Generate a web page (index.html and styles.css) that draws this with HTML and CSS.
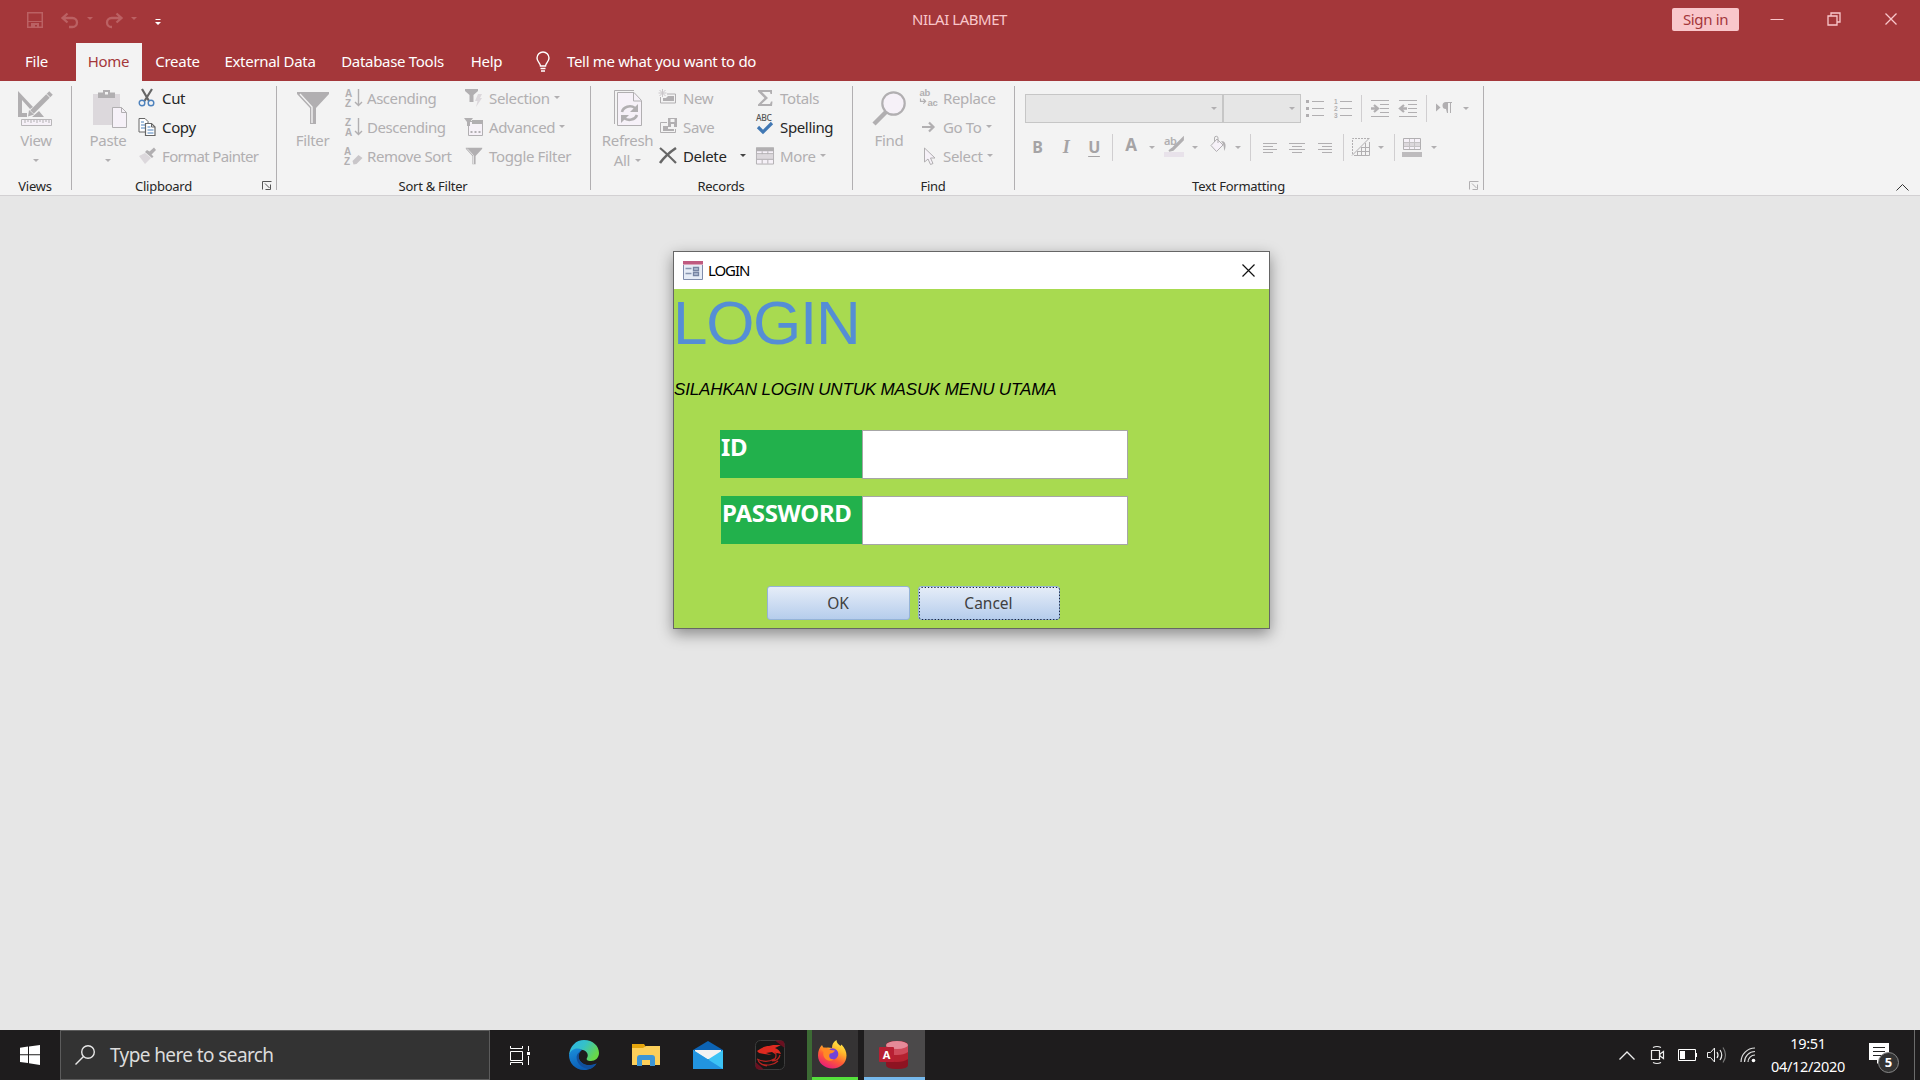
FILE: index.html
```html
<!DOCTYPE html>
<html lang="en">
<head>
<meta charset="utf-8">
<title>NILAI LABMET</title>
<link rel="stylesheet" href="styles.css">
</head>
<body>
<svg class="defs" width="0" height="0">
  <defs>
    <symbol id="arr" viewBox="0 0 6 3"><path d="M0 0h6L3 3z" fill="currentColor"/></symbol>
    <symbol id="launcher" viewBox="0 0 10 9"><path d="M.5 8.500V.5H9.500M3 2.500L7.500 7M8.500 3.500V8.500H3.500" fill="none" stroke="currentColor"/></symbol>
    <symbol id="funnel" viewBox="0 0 32 32"><path d="M0 0h32v2L19 16v16h-6V16L0 2z" fill="#b1afb1"/><path d="M3 2l12 13v16" fill="none" stroke="#f3f3f3" stroke-width="1.400"/></symbol>
  </defs>
</svg>

<header class="titlebar">
  <div class="quick">
    <svg class="q-save" viewBox="0 0 16 16"><path d="M.75.75h14.500v14.500H.75z" fill="none" stroke="currentColor" stroke-width="1.500"/><path d="M1 9.500h14" fill="none" stroke="currentColor"/><path d="M4 11h8v5h-2v-3H8v3H4z" fill="currentColor"/></svg>
    <svg class="q-undo" viewBox="0 0 18 15"><path d="M6.500.5L1.500 5l5 4.500M2 5h9.500a4.500 4.500 0 010 9H8" fill="none" stroke="currentColor" stroke-width="2.300"/></svg>
    <svg class="tri q-a1"><use href="#arr"/></svg>
    <svg class="q-redo" viewBox="0 0 18 15"><path d="M11.500.5l5 4.500-5 4.500M16 5H6.500a4.500 4.500 0 000 9H7" fill="none" stroke="currentColor" stroke-width="2.300"/></svg>
    <svg class="tri q-a2"><use href="#arr"/></svg>
    <svg class="q-more" viewBox="0 0 6 6"><path d="M.5 0h5v1h-5zM0 3h6L3 6z" fill="#fff"/></svg>
  </div>
  <div class="app-name">NILAI LABMET</div>
  <div class="win">
    <button class="signin">Sign in</button>
    <svg class="w-min" viewBox="0 0 14 14"><path d="M.5 7.500h13" stroke="#f9c7cb" fill="none"/></svg>
    <svg class="w-max" viewBox="0 0 14 14"><path d="M1 4h9v9H1zM4 4V1h9v9h-3" stroke="#f9c7cb" stroke-width="1.300" fill="none"/></svg>
    <svg class="w-close" viewBox="0 0 12 12"><path d="M.5.5l11 11M11.500.5l-11 11" stroke="#f9c7cb" stroke-width="1.300" fill="none"/></svg>
  </div>
</header>

<nav class="tabs">
  <a class="tab t-file">File</a>
  <a class="tab t-home">Home</a>
  <a class="tab t-create">Create</a>
  <a class="tab t-ext">External Data</a>
  <a class="tab t-db">Database Tools</a>
  <a class="tab t-help">Help</a>
  <svg class="bulb" viewBox="0 0 14 20"><path d="M4.500 14c0-3-3.500-4-3.500-8a6 6 0 0112 0c0 4-3.500 5-3.500 8zM4.500 16.500h5M5 19h4" fill="none" stroke="#fff" stroke-width="1.400"/></svg>
  <a class="tab t-tell">Tell me what you want to do</a>
</nav>

<section class="ribbon">
  <div class="group g-views">
    <div class="content">
      <div class="big">
        <svg class="i-view" viewBox="0 0 36 36"><path d="M0 1v26h9v-4H4V10l8 9 3-2zM14 27h12l-5-6z" fill="#b1afb1"/><path d="M33 3L14 22" stroke="#b1afb1" stroke-width="5"/><path d="M28 3.500l5 5" stroke="#f3f3f3" stroke-width="1"/><path d="M11 20l5 4.500-6 2z" fill="#b1afb1"/><path d="M3.500 29.500h30v6h-30z" fill="#f6f1f8" stroke="#b9b7b9"/><path d="M7 30v3m3-3v2m3-2v3m3-3v2m3-2v3m3-3v2m3-2v3m3-3v2m3-2v3" stroke="#b1afb1"/></svg>
        <span>View</span><svg class="tri"><use href="#arr"/></svg>
      </div>
    </div>
    <div class="caption">Views</div>
  </div>

  <div class="group g-clip">
    <div class="content">
      <div class="big paste">
        <svg class="i-paste" viewBox="0 0 35 38"><path d="M0 4h27v31H0z" fill="#dcd8dc"/><path d="M5 2.500h5V0h7v2.500h5V8H5z" fill="#b1afb1"/><path d="M12 2h3v2.500h-3z" fill="#f3f3f3"/><path d="M19.500 17.500h9l5 5v15h-14z" fill="#f6f1f8" stroke="#b1afb1"/><path d="M28.500 17.500v5h5" fill="none" stroke="#b1afb1"/></svg>
        <span>Paste</span><svg class="tri"><use href="#arr"/></svg>
      </div>
      <div class="list">
        <div class="row on"><svg viewBox="0 0 18 18"><path d="M4 0l7 12M14 0L6.500 12" stroke="#666" stroke-width="2.200" fill="none"/><circle cx="4" cy="14" r="2.800" fill="none" stroke="#4d82bd" stroke-width="1.400"/><circle cx="13" cy="14" r="2.800" fill="none" stroke="#4d82bd" stroke-width="1.400"/></svg><span>Cut</span></div>
        <div class="row on"><svg viewBox="0 0 18 18"><path d="M1 .5h6l3 3V14H1z" fill="#fff" stroke="#666"/><path d="M3 4h3M3 7h4M3 10h4" stroke="#4d82bd"/><path d="M7.500 5.500h6l3.500 3.500v8.500H7.500z" fill="#fff" stroke="#666" stroke-width="1.200"/><path d="M13.500 5.500V9H17" fill="none" stroke="#666"/><path d="M9.500 9h3M9.500 12h6M9.500 15h6" stroke="#4d82bd"/></svg><span>Copy</span></div>
        <div class="row painter"><svg viewBox="0 0 18 18"><path d="M1 9l6-3 6 5-6 6z" fill="#dcd8dc"/><path d="M7 5l7 6 1.500-1.500-2-2 4.500-4.500-2-2.500-4.500 4-2.500-1.500z" fill="#b1afb1"/></svg><span>Format Painter</span></div>
      </div>
    </div>
    <div class="caption">Clipboard</div>
    <svg class="launch"><use href="#launcher"/></svg>
  </div>

  <div class="group g-sort">
    <div class="content">
      <div class="big filter">
        <svg class="i-funnel"><use href="#funnel"/></svg>
        <span>Filter</span>
      </div>
      <div class="list l-asc">
        <div class="row"><svg viewBox="0 0 18 18"><text x="0" y="7.500" class="az">A</text><text x="0" y="18" class="az">Z</text><path d="M13.500 0v16M10 13l3.500 3.500L17 13" fill="none" stroke="#b1afb1" stroke-width="1.400"/></svg><span>Ascending</span></div>
        <div class="row"><svg viewBox="0 0 18 18"><text x="0" y="7.500" class="az">Z</text><text x="0" y="18" class="az">A</text><path d="M13.500 0v16M10 13l3.500 3.500L17 13" fill="none" stroke="#b1afb1" stroke-width="1.400"/></svg><span>Descending</span></div>
        <div class="row"><svg viewBox="0 0 18 18"><text x="-1" y="7.500" class="az">A</text><text x="-1" y="18" class="az">Z</text><path d="M7.500 14l6-6 4 3-6 6-3 .5z" fill="#c9c6c9"/></svg><span>Remove Sort</span></div>
      </div>
      <div class="list l-sel">
        <div class="row"><svg viewBox="0 0 18 18"><path d="M0 0h13v2L8.500 6v7h-4V6L0 2z" fill="#b1afb1"/><path d="M13 5h4l-2 4h2l-6 9 1.500-6H10z" fill="#dcd8dc"/></svg><span>Selection</span><svg class="tri"><use href="#arr"/></svg></div>
        <div class="row"><svg viewBox="0 0 18 18"><path d="M3.500 3.500h14v14h-14z" fill="#f6f1f8" stroke="#b1afb1"/><path d="M7 2h11v4H7zM-1 0h9L5 4v4H2V4z" fill="#b1afb1"/><path d="M5.500 13h2v2h-2zM9.500 13h2v2h-2zM13.500 13h2v2h-2z" fill="#b1afb1"/></svg><span>Advanced</span><svg class="tri"><use href="#arr"/></svg></div>
        <div class="row"><svg viewBox="-1 0 34 32"><use href="#funnel" width="32" height="32"/></svg><span>Toggle Filter</span></div>
      </div>
    </div>
    <div class="caption">Sort &amp; Filter</div>
  </div>

  <div class="group g-rec">
    <div class="content">
      <div class="big refresh">
        <svg class="i-refresh" viewBox="0 0 28 36"><path d="M.5 34V.5H20" fill="none" stroke="#b1afb1"/><path d="M3.500 2.500H20l7.500 8v25h-24z" fill="#f6f1f8" stroke="#b1afb1"/><path d="M19.500 3v8H27" fill="none" stroke="#b1afb1"/><path d="M8 22a8 7 0 0113-4M23 25a8 7 0 01-13 3" fill="none" stroke="#b1afb1" stroke-width="2.600"/><path d="M24 14v8h-8zM7 33v-8h8z" fill="#b1afb1"/></svg>
        <span>Refresh</span>
        <span class="line2">All <svg class="tri"><use href="#arr"/></svg></span>
      </div>
      <div class="list l-new">
        <div class="row"><svg viewBox="0 0 18 18"><path d="M1.500 8v6h15V5H8" fill="none" stroke="#b1afb1"/><path d="M4 9h3l2-2h6v5H4z" fill="#b1afb1"/><path d="M3.500 0v8M-.5 4h8M.5 1l6 6M6.500 1l-6 6" stroke="#c9c6c9"/></svg><span>New</span></div>
        <div class="row"><svg viewBox="0 0 18 18"><path d="M8 4.500H1.500v10h15V11" fill="none" stroke="#b1afb1"/><path d="M4 8h5v5H4zM9 0h9v9H9z" fill="#b1afb1"/><path d="M11.500 1h4v3h-4zM12 6h3v3h-3z" fill="#f3f3f3"/><path d="M9 11h6v2H9z" fill="#b1afb1"/></svg><span>Save</span></div>
        <div class="row on"><svg viewBox="0 0 18 18"><path d="M1 1c5 4 10 9 16 15" stroke="#666" stroke-width="2.200" fill="none"/><path d="M17 1C11 5 6 9 1 16" stroke="#666" stroke-width="2.600" fill="none"/></svg><span>Delete</span><svg class="tri del"><use href="#arr"/></svg></div>
      </div>
      <div class="list l-tot">
        <div class="row"><svg viewBox="0 0 18 18"><path d="M2 1h14v4h-1.500L14 3H6l6 6-6.500 6H14l1-2.500h1.500L16 17H2v-1.500L8.500 9 2 2.500z" fill="#b1afb1"/></svg><span>Totals</span></div>
        <div class="row on"><svg class="abc" viewBox="0 0 18 21"><text x="0" y="7" class="abc-t">ABC</text><path d="M2 13l5 5 9-9" fill="none" stroke="#4178b4" stroke-width="3.200"/></svg><span>Spelling</span></div>
        <div class="row"><svg viewBox="0 0 19 18"><path d="M.5.500h18v17H.5z" fill="#f6f1f8" stroke="#b1afb1"/><path d="M0 0h19v4H0z" fill="#b1afb1"/><path d="M1 7h17v6H1z" fill="#dcd8dc"/><path d="M1 6.500h17M1 12.500h17M6.500 4v3m6-3v3M6.500 13v4m6-4v4" stroke="#b1afb1"/></svg><span>More</span><svg class="tri"><use href="#arr"/></svg></div>
      </div>
    </div>
    <div class="caption">Records</div>
  </div>

  <div class="group g-find">
    <div class="content">
      <div class="big find">
        <svg class="i-find" viewBox="0 0 34 35"><path d="M14 21L2 33" stroke="#b1afb1" stroke-width="4.500"/><circle cx="21.500" cy="12.500" r="11.200" fill="#f6f1f8" stroke="#b1afb1" stroke-width="2.200"/></svg>
        <span>Find</span>
      </div>
      <div class="list l-rep">
        <div class="row"><svg class="wide" viewBox="0 0 20 19"><text x="0" y="7.500" class="ab-t">ab</text><text x="8.500" y="18" class="ab-t">ac</text><path d="M1 10v3h5M4 10.500L6.500 13 4 15.500" fill="none" stroke="#b1afb1" stroke-width="1.200"/></svg><span>Replace</span></div>
        <div class="row"><svg class="wide" viewBox="0 0 20 18"><path d="M3 9h11M10 4.500L14.500 9 10 13.500" fill="none" stroke="#b1afb1" stroke-width="2.200"/></svg><span>Go To</span><svg class="tri"><use href="#arr"/></svg></div>
        <div class="row"><svg class="wide" viewBox="0 0 20 18"><path d="M5.500 1v14l3.500-3 2.500 5.500 2.500-1-2.500-5.500H16z" fill="#f6f1f8" stroke="#b1afb1"/></svg><span>Select</span><svg class="tri"><use href="#arr"/></svg></div>
      </div>
    </div>
    <div class="caption">Find</div>
  </div>

  <div class="group g-text">
    <div class="content tools">
      <div class="bar">
        <div class="combo c-font"><svg class="tri"><use href="#arr"/></svg></div>
        <div class="combo c-size"><svg class="tri"><use href="#arr"/></svg></div>
        <i class="cell w28"><svg width="18" height="18"><path d="M6 2.500h12M6 9.500h12M6 16.500h12" stroke="#b1afb1"/><path d="M0 1h3v3H0zM0 8h3v3H0zM0 15h3v3H0z" fill="#b1afb1"/></svg></i>
        <i class="cell w28"><svg width="18" height="20"><path d="M6 3.500h12M6 10.500h12M6 17.500h12" stroke="#b1afb1"/><text x="0" y="6" class="num">1</text><text x="0" y="13" class="num">2</text><text x="0" y="20" class="num">3</text></svg></i>
        <i class="cell w9"><b class="vr"></b></i>
        <i class="cell w28"><svg width="18" height="17"><path d="M0 .5h18M9 4.500h9M9 8.500h9M9 12.500h9M0 16.500h18" stroke="#b1afb1"/><path d="M0 8.500h6M3 5l4 3.500L3 12" fill="none" stroke="#b1afb1" stroke-width="2.300"/></svg></i>
        <i class="cell w28"><svg width="18" height="17"><path d="M0 .5h18M9 4.500h9M9 8.500h9M9 12.500h9M0 16.500h18" stroke="#b1afb1"/><path d="M8 8.500H2M5 5L1 8.500 5 12" fill="none" stroke="#b1afb1" stroke-width="2.300"/></svg></i>
        <i class="cell w9"><b class="vr"></b></i>
        <i class="cell w26"><svg width="16" height="12"><path d="M0 1.500v8L4.500 5.500zM10 7a3.500 3.500 0 010-7h6v1h-1v10h-1V1h-2v10h-1z" fill="#b1afb1"/></svg></i>
        <i class="cell w18"><svg class="tri"><use href="#arr"/></svg></i>
      </div>
      <div class="bar b2">
        <i class="cell w29 ch">B</i>
        <i class="cell w28 ch it">I</i>
        <i class="cell w28 ch un">U</i>
        <i class="cell w8"><b class="vr"></b></i>
        <i class="cell w30 ch a">A</i>
        <i class="cell w12"><svg class="tri"><use href="#arr"/></svg></i>
        <i class="cell w31"><svg width="20" height="20"><text x="0" y="8" class="hl-t">ab</text><path d="M19 1L9 11l-4 3 4-1L19 3z" stroke="#b1afb1" stroke-width="1.800" fill="#b1afb1"/><path d="M0 15h20v5H0z" fill="#e8e2ea"/></svg></i>
        <i class="cell w12"><svg class="tri"><use href="#arr"/></svg></i>
        <i class="cell w31"><svg class="bucket" width="17" height="17"><path d="M7 3l6 6-6.500 6.500L1 9.500z" fill="#f6f1f8" stroke="#b1afb1"/><path d="M4.500 6V2a1.500 1.500 0 013.500 0v5" fill="none" stroke="#b1afb1"/><path d="M11 5c4 0 6 3 3.500 10-1-3 0-6-3.500-10z" fill="#b1afb1"/></svg></i>
        <i class="cell w12"><svg class="tri"><use href="#arr"/></svg></i>
        <i class="cell w12"><b class="vr"></b></i>
        <i class="cell w27"><svg width="14" height="11"><path d="M0 1.500h14M0 4.500h10M0 7.500h14M0 10.500h10" stroke="#b1afb1"/></svg></i>
        <i class="cell w27"><svg width="16" height="11"><path d="M0 1.500h16M3 4.500h10M0 7.500h16M3 10.500h10" stroke="#b1afb1"/></svg></i>
        <i class="cell w29"><svg width="14" height="11"><path d="M0 1.500h14M4 4.500h10M0 7.500h14M4 10.500h10" stroke="#b1afb1"/></svg></i>
        <i class="cell w8"><b class="vr"></b></i>
        <i class="cell w28"><svg width="18" height="18"><path d="M.5 16V.5H17" fill="none" stroke="#b1afb1" stroke-dasharray="2 1"/><path d="M0 17.500L17.500 0M2 17.500h15.500V4M5 13.500h12.500M9 9.500h8.500M13.500 5v12M9.500 9v8M5.500 13v4" fill="none" stroke="#b1afb1"/></svg></i>
        <i class="cell w11"><svg class="tri"><use href="#arr"/></svg></i>
        <i class="cell w16"><b class="vr"></b></i>
        <i class="cell w24 lft"><svg width="20" height="19"><path d="M1.500.5h17v11h-17z" fill="#f6f1f8" stroke="#b1afb1"/><path d="M2 4h16v4H2z" fill="#dcd8dc"/><path d="M2 4.500h16M2 8.500h16M7.500 1v10M12.500 1v10" stroke="#c4c1c4"/><path d="M0 14h20v5H0z" fill="#bdbbbd"/></svg></i>
        <i class="cell w16"><svg class="tri"><use href="#arr"/></svg></i>
      </div>
    </div>
    <div class="caption">Text Formatting</div>
    <svg class="launch off"><use href="#launcher"/></svg>
  </div>
  <svg class="collapse" viewBox="0 0 13 7"><path d="M.5 6.500l6-6 6 6" fill="none" stroke="#333"/></svg>
</section>

<main class="workspace">
  <section class="dialog">
    <div class="d-title">
      <svg class="d-icon" viewBox="0 0 20 19"><path d="M.5.5h19v18H.5z" fill="#e6ecf6" stroke="#7f8cab"/><path d="M0 0h20v4H0z" fill="#bf5a80"/><path d="M0 3h20v1H0z" fill="#dba3b8"/><path d="M2.500 7.500h6M2.500 12.500h6" stroke="#8795b0" stroke-width="1.500"/><path d="M10.500 6.500h5v3h-5zM10.500 11.500h5v3h-5z" fill="#b8c4da" stroke="#7684a2" stroke-width="1.300"/></svg>
      <span>LOGIN</span>
      <svg class="d-close" viewBox="0 0 13 13"><path d="M.5.5l12 12M12.500.5l-12 12" stroke="#111" stroke-width="1.200"/></svg>
    </div>
    <div class="form">
      <h1>LOGIN</h1>
      <p class="hint">SILAHKAN LOGIN UNTUK MASUK MENU UTAMA</p>
      <div class="field"><label>ID</label><input type="text"></div>
      <div class="field pw"><label>PASSWORD</label><input type="password"></div>
      <div class="buttons"><button class="btn">OK</button><button class="btn focus">Cancel<svg class="ants" width="142" height="34"><rect x="1.500" y="1.500" width="140" height="32" rx="2" fill="none" stroke="#1a2340" stroke-dasharray="1.300 1.900"/></svg></button></div>
    </div>
  </section>
</main>

<footer class="taskbar">
  <div class="start"><svg viewBox="0 0 20 20" width="20" height="20"><path d="M0 2.700L8 1.600v7.700H0zM9 1.500L20 0v9.300H9zM0 10.300h8V18l-8-1zM9 10.300h11V20L9 18.300z" fill="#fff"/></svg></div>
  <div class="search"><svg viewBox="0 0 20 20" width="20" height="20"><circle cx="13" cy="7" r="6.300" fill="none" stroke="#e8e8e8" stroke-width="1.400"/><path d="M8.500 11.500L.5 19.500" stroke="#e8e8e8" stroke-width="1.500"/></svg><span>Type here to search</span></div>
  <div class="apps">
    <div class="app a-tv"><svg width="20" height="19" viewBox="0 0 20 19"><path d="M.5 0v2.500h12V0M.5 5.500h12v9H.5zM.5 19v-2.500h12V19M18.500 0v5M18.500 10v9" fill="none" stroke="#fff"/><path d="M17 6h3v3h-3z" fill="#fff"/></svg></div>
    <div class="app a-edge"><svg width="30" height="30" viewBox="0 0 30 30">
      <defs><linearGradient id="e1" x1="0" y1="0" x2="1" y2=".5"><stop offset="0" stop-color="#2db3e8"/><stop offset=".5" stop-color="#35c1c8"/><stop offset="1" stop-color="#68d848"/></linearGradient><linearGradient id="e2" x1="0" y1="0" x2=".4" y2="1"><stop offset="0" stop-color="#1a8fdb"/><stop offset="1" stop-color="#0b5cb4"/></linearGradient></defs>
      <path d="M0 15C1 6 7 0 15 0c9 0 15 6 15 13 0 5-4 8-8 8-4 0-5-1.500-4-3 2-3 0-7-4-8-6-1-11 1-14 5z" fill="url(#e1)"/>
      <path d="M0 15C2 9 8 7 13 10c-4 2-5 8-1 12 4 4 10 4 15.500 1.500C25 27.500 21 30 15 30 6 30 0 23 0 15z" fill="url(#e2)"/>
      <path d="M12 11c-3 3-3 8 0 11 4 4 10 4 15.500 1.500C26 26 23 28 21 29 11 29 6 20 8 15c1-2 2-3 4-4z" fill="#124f9c"/></svg></div>
    <div class="app a-exp"><svg width="28" height="24" viewBox="0 0 28 24"><path d="M0 1h12l2 3v5H0z" fill="#e5a50c"/><path d="M0 5h11l3-2h14v19H0z" fill="#fccf5a"/><path d="M5 23V15q0-3 3-3h12q3 0 3 3v8h-5v-6h-8v6z" fill="#3d96d6"/></svg></div>
    <div class="app a-mail"><svg width="30" height="28" viewBox="0 0 30 28"><path d="M0 9L15 0l15 9v8H0z" fill="#0c63b4"/><path d="M2 9h26v9H2z" fill="#f2f2f2"/><path d="M0 9l15 9.500L30 9v19H0z" fill="#3cc3f5"/><path d="M0 9l30 19H0z" fill="#2294e0"/></svg></div>
    <div class="app a-msi"><svg width="30" height="30" viewBox="0 0 30 30"><rect x=".5" y=".5" width="29" height="29" rx="5" fill="#171717" stroke="#3c3c3c"/><path d="M20 .5h6q3.500 0 3.500 4V8zM.5 22v4q0 3.500 4 3.500H9z" fill="#6a1020"/><path d="M2 11c4-3 8-5 12-5l4-1 8 0-6 3c3 1 5 3 6 6l-4-1-2 1-3-2-6 1 6 2-8-1-5-1z" fill="#dd2a20"/><path d="M20 12c2 4 1 7-3 9 4 0 7-2 8-6M2 19c6 3 12 3 17 0M6 24c6 2 13 1 17-3M3 20c1 3 4 5 9 6" fill="none" stroke="#b92420" stroke-width="1.200"/></svg></div>
    <div class="app a-ff"><svg width="29" height="30" viewBox="0 0 29 30">
      <defs><linearGradient id="f1" x1=".8" y1="0" x2=".3" y2="1"><stop offset="0" stop-color="#fff44f"/><stop offset=".35" stop-color="#ffb52a"/><stop offset=".65" stop-color="#ff5a36"/><stop offset="1" stop-color="#e6197d"/></linearGradient></defs>
      <path d="M4 5l1.500 3L10 7.500 14 8c0-4 1.500-6 4.500-8 0 3 2 4 4 6l1-1.500C27 8 28.500 12 28.500 15.500 28.500 23 22.500 28.500 14.500 28.500S0 23 0 15.500C0 11 1.500 7.500 4 5z" fill="url(#f1)"/><circle cx="14.500" cy="14" r="5.800" fill="#7242d8"/><path d="M2 8c5-1 8 0 10.500 2l4.500.5c-1 2-3 3-5 3-2 3 0 6 4 6C10 23 4 18 5.500 12z" fill="#ff8a25"/></svg></div>
    <div class="app a-acc"><svg width="29" height="28" viewBox="0 0 29 28"><path d="M7 4q0-4 11-4t11 4v20q0 4-11 4T7 24z" fill="#8e1322"/><path d="M7 4h22v14q-4 3-11 3T7 20z" fill="#b4212f"/><path d="M7 4h22v7q-4 3-11 3T7 12z" fill="#cf4a5a"/><ellipse cx="18" cy="4" rx="11" ry="4" fill="#e58a98"/><rect x="0" y="6" width="15" height="15" rx="1" fill="#b81f33"/><text x="7.500" y="18" text-anchor="middle" class="acc-t">A</text></svg></div>
  </div>
  <div class="tray">
    <svg class="t-up" width="16" height="9"><path d="M.5 8.500L8 1l7.500 7.500" fill="none" stroke="#eee" stroke-width="1.300"/></svg>
    <svg class="t-cam" width="15" height="18"><path d="M1.500 4.500h8v9h-8zM10 8l3.500-2.500v7L10 10zM3 1.500q4-2 8 0M3 16.500q4 2 8 0" fill="none" stroke="#eee" stroke-width="1.200"/></svg>
    <svg class="t-bat" width="19" height="12"><path d="M.5.5h17v11H.5zM18.500 4v4" fill="none" stroke="#fff"/><path d="M2 2h5v8H2z" fill="#fff"/></svg>
    <svg class="t-vol" width="20" height="18"><path d="M.5 6.500h3L7.500 2v14L3.500 11.500h-3z" fill="none" stroke="#eee"/><path d="M10 6q2 3 0 6M13 4q3.500 5 0 10" fill="none" stroke="#eee" stroke-width="1.200"/><path d="M16 1.500q5 7.500 0 15" fill="none" stroke="#777" stroke-width="1.200"/></svg>
    <svg class="t-wifi" width="16" height="16"><path d="M1 15A14 14 0 0115 1M4.500 15A10.500 10.500 0 0115 4.500M8 15a7 7 0 017-7" fill="none" stroke="#ddd" stroke-width="1.200"/><circle cx="13.500" cy="13.500" r="1.800" fill="#fff"/></svg>
    <div class="clock"><span class="time">19:51</span><span>04/12/2020</span></div>
    <div class="notif"><svg width="20" height="21"><path d="M0 0h20v17h-8l-4 4v-4H0z" fill="#fff"/><path d="M4 4.500h12M4 8.500h12M4 12.500h9" stroke="#222"/></svg><span class="badge">5</span></div>
    <i class="peek"></i>
  </div>
</footer>
</body>
</html>
```
FILE: styles.css
```css
* { box-sizing: border-box; }
body {
  margin: 0;
  width: 1920px;
  height: 1080px;
  overflow: hidden;
  display: flex;
  flex-direction: column;
  background: #e6e6e6;
  font-family: "Noto Sans", "Open Sans", sans-serif;
  font-size: 15px;
  letter-spacing: -0.35px;
  white-space: nowrap;
}
svg { display: block; flex: none; overflow: visible; }
button { font: inherit; letter-spacing: inherit; border: 0; padding: 0; }
.defs { position: absolute; }
.tri { width: 6px; height: 3px; }

/* title bar */
.titlebar {
  height: 43px;
  flex: none;
  background: #a4373a;
  display: grid;
  grid-template-columns: 640px 640px 640px;
  color: #f9c7cb;
}
.quick { display: flex; height: 40px; align-items: center; padding-left: 27px; color: #bb6163; }
.q-save { width: 16px; height: 16px; }
.q-undo { width: 18px; height: 15px; margin-left: 18px; }
.q-a1 { margin-left: 8px; margin-bottom: 3px; }
.q-redo { width: 18px; height: 15px; margin-left: 12px; }
.q-a2 { margin-left: 8px; margin-bottom: 3px; }
.q-more { width: 6px; height: 6px; margin-left: 18px; margin-top: 4px; }
.app-name { text-align: center; line-height: 38px; letter-spacing: -0.45px; font-size: 15px; padding-right: 1px; }
.win { display: flex; height: 38px; align-items: center; padding-left: 392px; }
.signin { width: 67px; height: 23px; border-radius: 2px; background: #f9c7cb; color: #a4373a; line-height: 20px; padding-bottom: 2px; margin-top: 1px; }
.w-min { width: 14px; height: 14px; margin-left: 31px; }
.w-max { width: 14px; height: 14px; margin-left: 43px; }
.w-close { width: 12px; height: 12px; margin-left: 44px; }

/* tabs */
.tabs { height: 38px; flex: none; background: #a4373a; display: flex; color: #fff; align-items: center; letter-spacing: -0.3px; }
.tab { height: 38px; line-height: 37px; text-align: center; }
.t-file { width: 73px; margin-right: 3px; }
.t-home { width: 66px; background: #f3f3f3; color: #a4373a; padding-right: 1px; }
.t-create { width: 71px; }
.t-ext { width: 114px; }
.t-db { width: 131px; }
.t-help { width: 57px; }
.bulb { width: 14px; height: 20px; margin-left: 21px; }
.t-tell { margin-left: 17px; letter-spacing: -0.33px; }

/* ribbon */
.ribbon { height: 115px; flex: none; display: flex; background: #f3f3f3; position: relative; border-bottom: 1px solid #d2d0d2; color: #b1afb1; }
.group { display: flex; flex-direction: column; position: relative; padding-top: 2px; }
.group::after { content: ""; position: absolute; right: 0; top: 5px; height: 104px; width: 1px; background: #b1afb1; }
.g-views { width: 72px; }
.g-clip { width: 205px; }
.g-sort { width: 314px; }
.g-rec { width: 262px; }
.g-find { width: 162px; }
.g-text { width: 469px; }
.content { display: flex; height: 93px; flex: none; }
.caption { text-align: center; color: #262626; font-size: 13px; letter-spacing: -0.25px; line-height: 19px; padding: 1px 2px 0 0; }
.g-clip .caption { padding-right: 22px; }
.g-text .caption { padding-right: 22px; }
.launch { position: absolute; width: 10px; height: 9px; right: 5px; top: 100px; color: #555; }
.launch.off { color: #b1afb1; }
.big { width: 72px; display: flex; flex-direction: column; align-items: center; padding-top: 7px; }
.big > span { line-height: 20px; margin-top: 4px; }
.big > .tri { margin-top: 9px; }
.i-view { width: 36px; height: 36px; }
.i-paste { width: 35px; height: 38px; margin-left: 5px; }
.big.paste { width: 66px; padding-left: 6px; }
.big.paste > span { margin-top: 2px; }
.i-funnel { width: 32px; height: 32px; }
.big.filter { width: 68px; padding: 9px 0 0 3px; }
.big.filter > span { margin-top: 6px; }
.i-refresh { width: 28px; height: 36px; margin-left: 1px; }
.big.refresh { width: 69px; padding-left: 4px; }
.big.refresh .line2 { margin-top: 0; display: flex; gap: 5px; align-items: center; }
.i-find { width: 34px; height: 35px; }
.big.find { width: 66px; padding: 8px 0 0 6px; }
.big.find > span { margin-top: 4px; }
.row { height: 29px; display: flex; align-items: center; }
.row > svg:first-child { width: 18px; height: 18px; margin-right: 6px; }
.row > svg.wide:first-child { width: 20px; margin-right: 4px; }
.row > svg.abc:first-child { height: 21px; margin-bottom: 4px; }
.row .tri { margin-left: 4px; }
.row .tri.del { margin-left: 13px; color: #444; }
.row.on { color: #262626; }
.row.painter { letter-spacing: -0.65px; }
.l-asc { width: 120px; letter-spacing: -0.45px; }
.l-asc .row > svg:first-child { margin-right: 4px; }
.l-new { width: 97px; }
.l-new .row > svg:first-child { margin-right: 6px; margin-left: -1px; }
.l-tot { margin-left: -1px; }
.az { font: bold 10px/1 "Liberation Sans", sans-serif; fill: #b1afb1; }
.abc-t { font: 500 8.500px "Noto Sans", sans-serif; fill: #555; }
.ab-t { font: bold 10px/1 "Liberation Sans", sans-serif; fill: #b1afb1; }
.hl-t { font: 600 11px "Noto Sans", sans-serif; fill: #b1afb1; }
.num { font: bold 6.500px "Liberation Sans", sans-serif; fill: #b1afb1; }
.collapse { position: absolute; right: 11px; top: 103px; width: 13px; height: 7px; }

/* text formatting tools */
.tools { flex-direction: column; padding-left: 10px; }
.bar { display: flex; height: 50px; align-items: center; }
.bar.b2 { height: 30px; margin-left: -2px; margin-top: -1px; }
.combo { height: 29px; background: #e6e6e6; border: 1px solid #c6c6c6; display: flex; align-items: center; justify-content: flex-end; padding-right: 5px; }
.c-font { width: 198px; }
.c-size { width: 78px; }
.cell { display: flex; align-items: center; justify-content: center; font-style: normal; }
.vr { width: 1px; height: 27px; background: #d0ced0; }
.w8 { width: 8px; } .w9 { width: 9px; } .w11 { width: 11px; } .w12 { width: 12px; }
.w16 { width: 16px; } .w18 { width: 18px; } .w24 { width: 24px; } .w26 { width: 26px; }
.w27 { width: 27px; } .w28 { width: 28px; } .w29 { width: 29px; } .w30 { width: 30px; } .w31 { width: 31px; }
.ch { font-weight: 700; font-size: 16px; color: #a5a3a5; line-height: 28px; }
.it { font-family: "Liberation Serif", serif; font-style: italic; font-size: 18px; }
.un { text-decoration: underline; text-underline-offset: 3px; text-decoration-thickness: 1px; }
.a { font-size: 17px; padding-bottom: 4px; }
.bucket { margin-left: 4px; margin-bottom: 6px; }
.lft { justify-content: flex-start; }

/* login dialog */
.workspace { flex: 1; padding: 55px 0 0 673px; }
.dialog { width: 597px; height: 378px; border: 1px solid #666; background: #fff; box-shadow: 0 5px 14px rgba(0, 0, 0, .4); }
.d-title { height: 37px; display: flex; align-items: center; padding: 0 14px 1px 9px; font-size: 15px; letter-spacing: -1.1px; color: #000; }
.d-icon { width: 20px; height: 19px; margin-right: 5px; }
.d-close { width: 13px; height: 13px; margin-left: auto; }
.form { height: 339px; background: #a8da50; font-family: "Liberation Sans", Arial, sans-serif; letter-spacing: 0; color: #000; }
h1 { margin: 0 0 0 -1px; font-weight: 400; font-size: 62px; line-height: 68px; color: #558ed5; letter-spacing: -1.3px; }
.hint { margin: 20px 0 0; font-style: italic; font-size: 17px; line-height: 26px; letter-spacing: -0.15px; }
.field { display: flex; margin: 27px 0 0 46px; height: 49px; }
.field label { width: 142px; height: 48px; background: #22b14c; color: #fff; font: bold 24px/34px "Noto Sans", sans-serif; letter-spacing: -0.3px; padding-left: 1px; }
.field input { width: 266px; height: 49px; border: 1px solid #a6a6a6; background: #fff; padding: 0; }
.field.pw { margin: 17px 0 0 47px; }
.field.pw label { width: 141px; }
.buttons { display: flex; gap: 8px; margin: 41px 0 0 93px; }
.btn { width: 143px; height: 34px; border: 1px solid #95b3d7; border-radius: 3px; background: linear-gradient(#e6edf8, #b6cdec); color: #404040; font: 15.5px/30px "Noto Sans", sans-serif; padding: 0 1px 1px 0; }
.btn.focus { width: 142px; position: relative; }
.ants { position: absolute; left: -1px; top: -1px; }

/* taskbar */
.taskbar { height: 50px; flex: none; background: #1e1c1d; display: flex; color: #fff; }
.start { width: 60px; display: grid; place-items: center; }
.search { width: 430px; border: 1px solid #5c5c5c; background: #333; display: flex; align-items: center; gap: 15px; padding-left: 14px; font-size: 19px; letter-spacing: -0.6px; color: #dcdcdc; }
.apps { display: flex; width: 436px; }
.app { display: grid; place-items: center; height: 50px; }
.a-tv { width: 60px; }
.a-edge { width: 68px; }
.a-exp { width: 56px; }
.a-mail { width: 68px; }
.a-msi { width: 56px; margin-right: 9px; }
.a-ff { width: 51px; background: #353334; border-left: 5px solid #3c6a34; box-shadow: inset 0 -3px #55e03c; margin-right: 6px; padding-right: 5px; }
.a-acc { width: 61px; background: #4b494a; box-shadow: inset 0 -3px #76b9ed; padding-right: 2px; }
.acc-t { font: bold 11px "Noto Sans", sans-serif; fill: #fff; }
.tray { flex: 1; display: flex; align-items: center; padding-left: 693px; }
.t-cam { margin-left: 15px; }
.t-bat { margin-left: 13px; }
.t-vol { margin-left: 10px; }
.t-wifi { margin-left: 13px; }
.clock { width: 104px; display: flex; flex-direction: column; align-items: center; line-height: 23px; font-size: 14.5px; letter-spacing: -0.3px; }
.notif { position: relative; margin-left: 9px; margin-bottom: 4px; }
.badge { position: absolute; left: 9px; top: 9px; width: 21px; height: 21px; border-radius: 50%; background: #333; border: 1px solid #888; font-weight: 700; font-size: 13px; line-height: 18px; text-align: center; letter-spacing: 0; }
.peek { align-self: stretch; width: 1px; background: #6b6b6b; margin-left: 25px; }
```
